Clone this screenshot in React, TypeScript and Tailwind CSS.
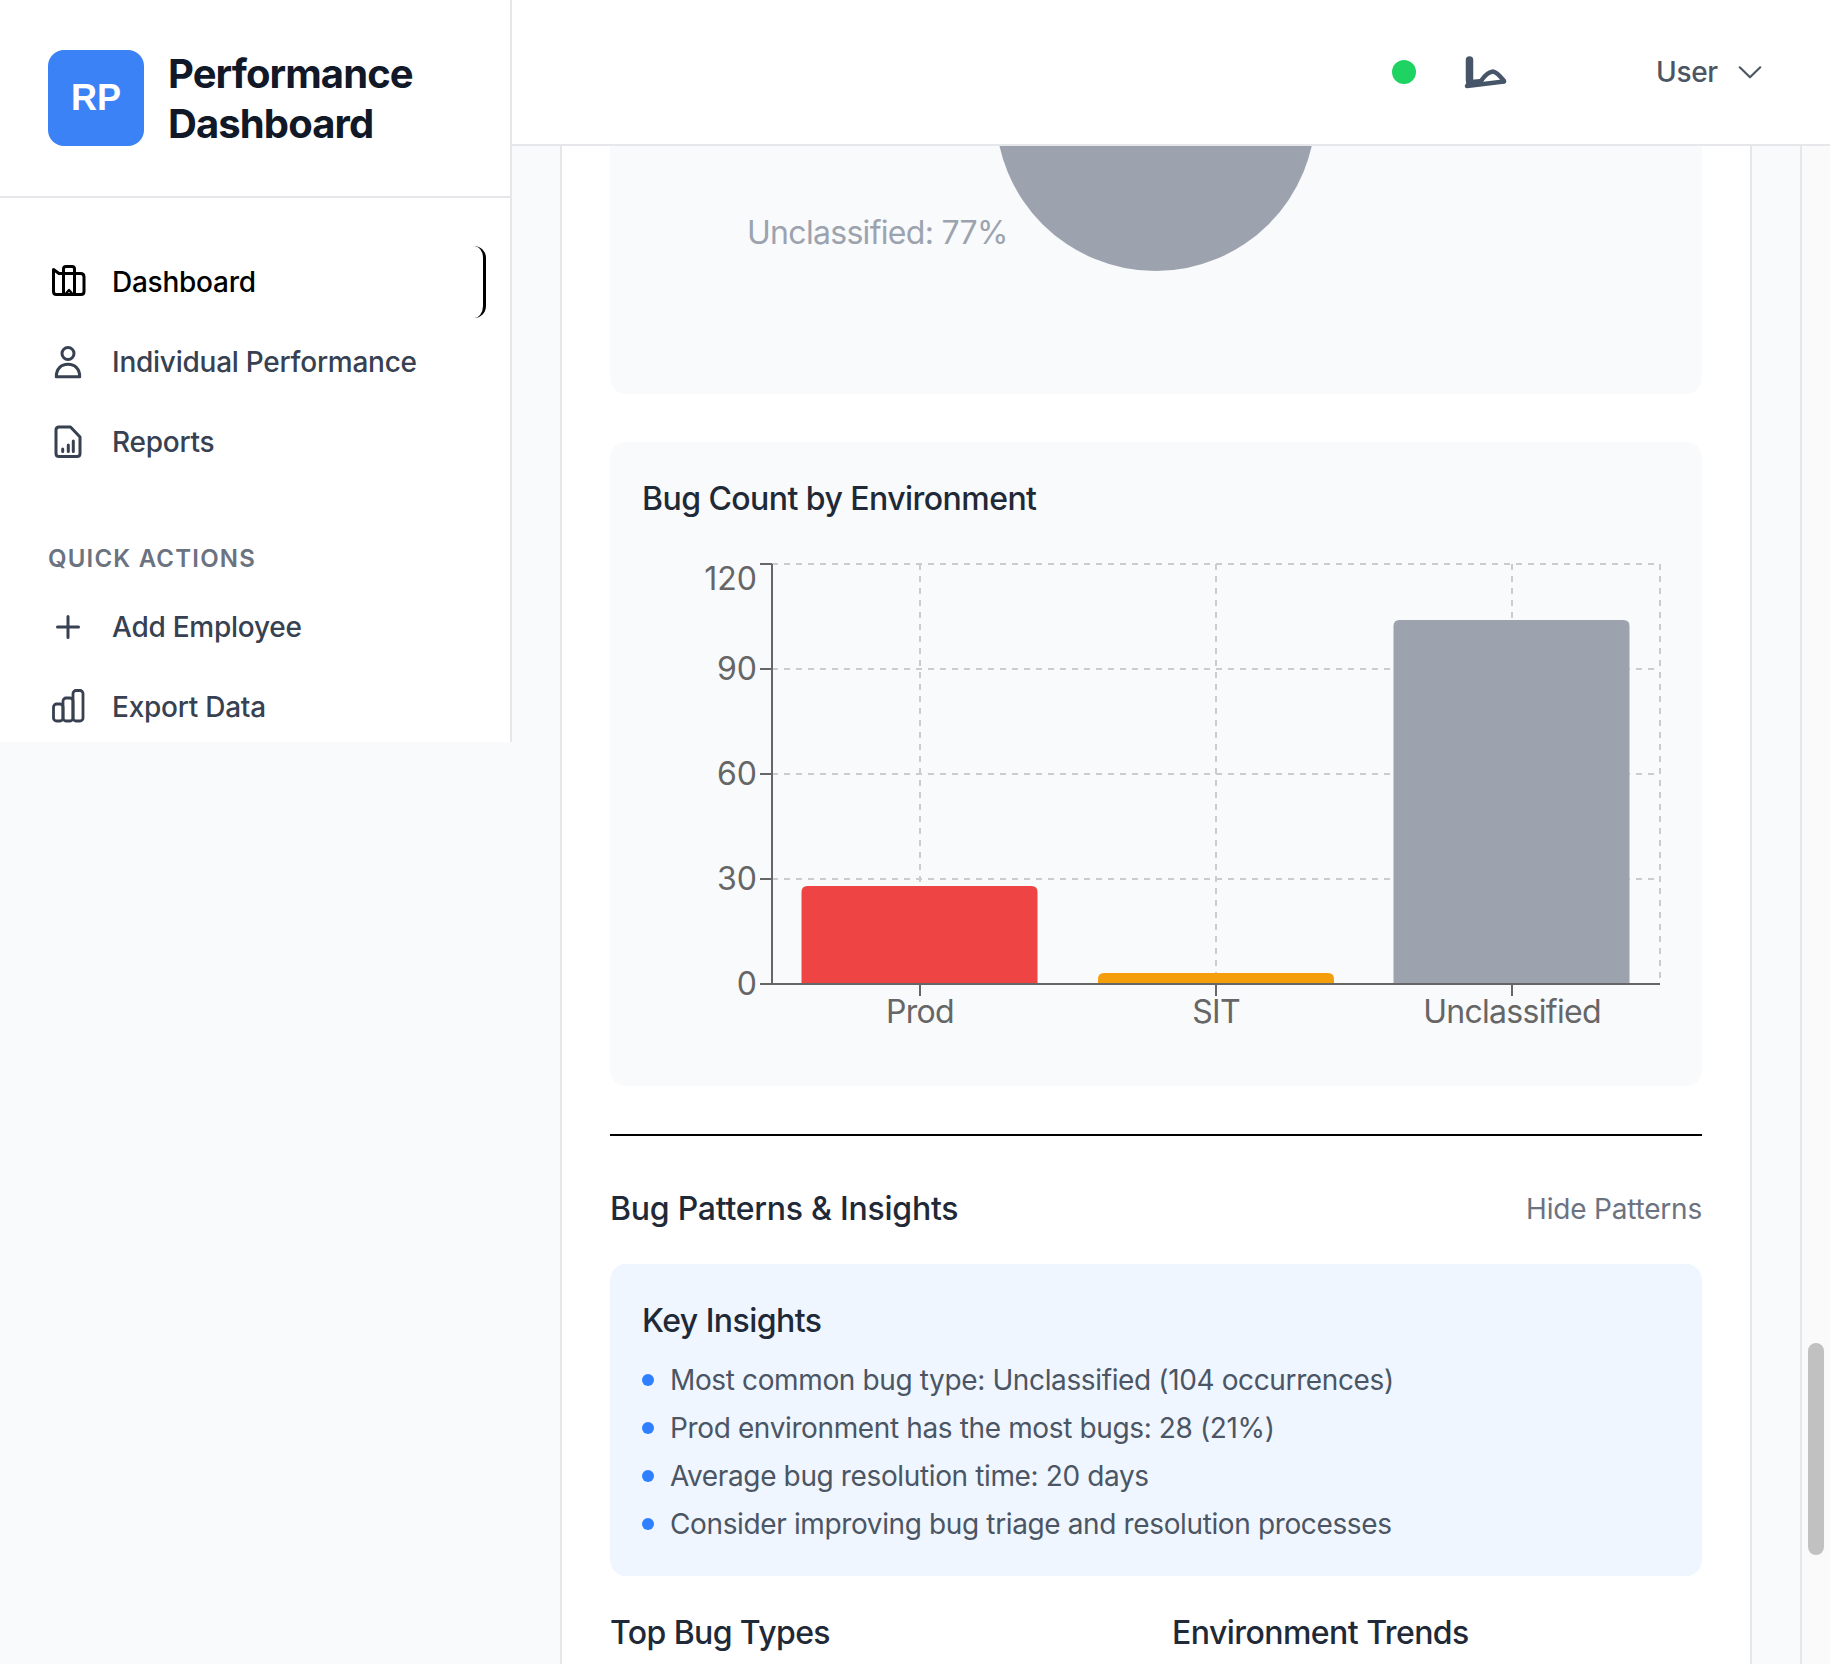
import React from "react";

const ChartIcon = () => (
	<svg viewBox="0 0 40 40" className="w-10 h-10 shrink-0" fill="none" stroke="currentColor" strokeWidth={2.8} strokeLinejoin="round">
		<rect x="5.5" y="17" width="9.5" height="17" rx="3" />
		<rect x="15" y="11" width="10" height="23" rx="3" />
		<rect x="25" y="3.5" width="10" height="30.5" rx="3" />
	</svg>
);

const BriefcaseIcon = () => (
	<svg viewBox="0 0 40 40" className="w-10 h-10 shrink-0" fill="none" stroke="currentColor" strokeWidth={3} strokeLinejoin="round" strokeLinecap="round">
		<path d="M5.5 7.5L11 11.5H32.5Q36 11.5 36 15V29.5Q36 32.5 33 32.5H8.5Q5.5 32.5 5.5 29.5Z" />
		<path d="M15.5 32V7Q15.5 4.5 18 4.5H24Q26.5 4.5 26.5 7V32" />
		<path d="M18 31.5L21 28L24 31.5" strokeWidth={2.4} />
	</svg>
);

const PersonIcon = () => (
	<svg viewBox="0 0 40 40" className="w-10 h-10 shrink-0" fill="none" stroke="currentColor" strokeWidth={3} strokeLinejoin="round">
		<circle cx="20" cy="11.5" r="6" />
		<path d="M8.3 34.7C8.3 27 13 22.3 20 22.3C27 22.3 31.7 27 31.7 34.7Z" />
	</svg>
);

const ReportIcon = () => (
	<svg viewBox="0 0 40 40" className="w-10 h-10 shrink-0" fill="none" stroke="currentColor" strokeWidth={3} strokeLinejoin="round" strokeLinecap="round">
		<path d="M11 5H22.5L32 15V31.5Q32 34.5 29 34.5H11Q8 34.5 8 31.5V8Q8 5 11 5Z" />
		<path d="M14.7 29.5V27M20.3 29.5V23M25.3 29.5V19" />
	</svg>
);

const PlusIcon = () => (
	<svg viewBox="0 0 40 40" className="w-10 h-10 shrink-0" fill="none" stroke="currentColor" strokeWidth={3} strokeLinecap="round">
		<path d="M20 9.5V30.5M9.5 20H30.5" />
	</svg>
);

interface INavProps {
	label: string;
	icon: React.ReactNode;
	active?: boolean;
}

const NavItem = (props: INavProps) => {
	return (
		<div
			className={`h-[72px] flex items-center gap-6 px-6 rounded-xl text-[28px] tracking-[-0.25px] font-medium ${
				props.active ? "text-black border-r-[3px] border-black" : "text-[#374151]"
			}`}
		>
			{props.icon}
			<span>{props.label}</span>
		</div>
	);
};

const Sidebar = () => {
	return (
		<aside className="w-[512px] h-[742px] shrink-0 bg-white border-r-2 border-[#e5e7eb] overflow-hidden">
			<div className="h-[198px] flex items-center gap-6 px-12 border-b-2 border-[#e5e7eb]">
				<div className="w-24 h-24 shrink-0 rounded-2xl bg-[#3b82f6] flex items-center justify-center text-white text-[36px] font-bold font-['Liberation_Sans',sans-serif]">
					RP
				</div>
				<h1 className="pt-[2px] text-[40px] leading-[50px] tracking-[-0.9px] font-bold text-[#111827]">
					Performance
					<br />
					Dashboard
				</h1>
			</div>
			<nav className="px-6 pt-12">
				<div className="flex flex-col gap-2">
					<NavItem label="Dashboard" icon={<BriefcaseIcon />} active />
					<NavItem label="Individual Performance" icon={<PersonIcon />} />
					<NavItem label="Reports" icon={<ReportIcon />} />
				</div>
				<h3 className="mt-[65px] mb-4 px-6 text-[24px] leading-8 font-semibold tracking-wider uppercase text-[#6b7280]">
					Quick Actions
				</h3>
				<div className="flex flex-col gap-2">
					<NavItem label="Add Employee" icon={<PlusIcon />} />
					<NavItem label="Export Data" icon={<ChartIcon />} />
				</div>
			</nav>
		</aside>
	);
};

const Header = () => {
	return (
		<header className="h-[146px] bg-white border-b-2 border-[#e5e7eb] flex items-center pl-[880px]">
			<div className="w-6 h-6 rounded-full bg-[#1fd363]" />
			<svg viewBox="0 0 48 36" className="w-12 h-9 ml-[44px]" fill="none" stroke="#475569" strokeLinecap="round" strokeLinejoin="round">
				<path d="M9.5 6V26" strokeWidth={7.5} />
				<path d="M7 32L44 27.5" strokeWidth={4.5} />
				<path d="M21 27Q27 18 33 17.5Q37 18 44 27" strokeWidth={4.5} />
				<path d="M9 29L20 28" strokeWidth={6} />
			</svg>
			<span className="ml-[148px] text-[28px] tracking-[-0.3px] text-[#4b5563] font-medium">User</span>
			<svg viewBox="0 0 24 24" className="w-8 h-8 ml-4" fill="none" stroke="#4b5563" strokeWidth={1.6} strokeLinecap="round" strokeLinejoin="round">
				<path d="M4.3 8.5L12 16L19.7 8.5" />
			</svg>
		</header>
	);
};

const BugPieClip = () => {
	return (
		<div className="h-[248px] rounded-b-2xl bg-[#f9fafb] overflow-hidden">
			<svg viewBox="610 146 1092 248" className="w-full h-full block">
				<circle cx="1155.6" cy="111" r="160" fill="#9ca3af" />
				<text x="747" y="244" fontSize="32" letterSpacing="-0.7" fill="#9ca3af">
					Unclassified: 77%
				</text>
			</svg>
		</div>
	);
};

const yTicks = [
	{ label: "120", y: 564, base: 590 },
	{ label: "90", y: 669, base: 680 },
	{ label: "60", y: 774, base: 785 },
	{ label: "30", y: 879, base: 890 },
	{ label: "0", y: 984, base: 995 },
];

const bars = [
	{ label: "Prod", x: 801.5, width: 236, y: 886, color: "#ef4444", center: 920 },
	{ label: "SIT", x: 1098, width: 236, y: 973, color: "#f59e0b", center: 1216 },
	{ label: "Unclassified", x: 1393.5, width: 236, y: 620, color: "#9ca3af", center: 1512 },
];

const roundedTop = (x: number, y: number, w: number) =>
	`M${x} 984V${y + 6}Q${x} ${y} ${x + 6} ${y}H${x + w - 6}Q${x + w} ${y} ${x + w} ${y + 6}V984Z`;

const EnvChart = () => {
	return (
		<svg viewBox="642 552 1028 502" className="w-full h-[502px] block">
			<g stroke="#ccc" strokeWidth={2} strokeDasharray="6 6" fill="none">
				<path d="M772 564H1660V984" />
				{yTicks.slice(1, 4).map((t) => (
					<path key={t.label} d={`M772 ${t.y}H1660`} />
				))}
				{bars.map((b) => (
					<path key={b.label} d={`M${b.center} 564V984`} />
				))}
			</g>
			{bars.map((b) => (
				<path key={b.label} d={roundedTop(b.x, b.y, b.width)} fill={b.color} />
			))}
			<path d="M772 564V984H1660" stroke="#666" strokeWidth={2} fill="none" />
			{yTicks.map((t) => (
				<g key={t.label}>
					<path d={`M760 ${t.y}H772`} stroke="#666" strokeWidth={2} />
					<text x="757" y={t.base} textAnchor="end" fontSize="32" fill="#666">
						{t.label}
					</text>
				</g>
			))}
			{bars.map((b) => (
				<g key={b.label}>
					<path d={`M${b.center} 984V996`} stroke="#666" strokeWidth={2} />
					<text x={b.center} y="1023" textAnchor="middle" fontSize="32" letterSpacing="-0.7" fill="#666">
						{b.label}
					</text>
				</g>
			))}
		</svg>
	);
};

const insights = [
	"Most common bug type: Unclassified (104 occurrences)",
	"Prod environment has the most bugs: 28 (21%)",
	"Average bug resolution time: 20 days",
	"Consider improving bug triage and resolution processes",
];

const Content = () => {
	return (
		<main className="flex-1 px-12 overflow-hidden">
			<div className="h-full bg-white border-x-2 border-[#e5e7eb] px-12">
				<BugPieClip />

				<section className="mt-12 h-[644px] rounded-2xl bg-[#f9fafb] px-8 pt-[33px]">
					<h3 className="text-[32px] leading-12 tracking-[-0.55px] font-medium text-[#1f2937]">Bug Count by Environment</h3>
					<div className="mt-[29px]">
						<EnvChart />
					</div>
				</section>

				<div className="mt-12 border-t-2 border-black pt-[49px]">
					<div className="h-12 flex items-center justify-between">
						<h3 className="text-[32px] tracking-[-0.25px] font-medium text-[#1f2937]">Bug Patterns &amp; Insights</h3>
						<button className="text-[28px] tracking-[-0.2px] text-[#6b7280]">Hide Patterns</button>
					</div>

					<div className="mt-[31px] h-[312px] rounded-2xl bg-[#eff6ff] px-8 pt-[33px]">
						<h4 className="text-[32px] leading-12 tracking-[-0.55px] font-medium text-[#1f2937]">Key Insights</h4>
						<ul className="mt-[15px] flex flex-col gap-2">
							{insights.map((text) => (
								<li key={text} className="h-10 flex items-center gap-4 text-[28px] tracking-[-0.37px] text-[#4b5563]">
									<span className="w-3 h-3 rounded-full bg-[#2f80ff] shrink-0" />
									<span>{text}</span>
								</li>
							))}
						</ul>
					</div>

					<div className="mt-[33px] grid grid-cols-2 gap-8">
						<h3 className="text-[32px] leading-12 tracking-[-0.6px] font-medium text-[#1f2937]">Top Bug Types</h3>
						<h3 className="text-[32px] leading-12 tracking-[-0.55px] font-medium text-[#1f2937]">Environment Trends</h3>
					</div>
				</div>
			</div>
		</main>
	);
};

const App = () => {
	return (
		<div className="w-[1830px] h-[1664px] flex bg-[#f9fafb] overflow-hidden font-['Inter',sans-serif]">
			<Sidebar />
			<div className="flex-1 flex flex-col min-w-0">
				<Header />
				<div className="flex-1 flex min-h-0">
					<Content />
					<div className="w-[30px] shrink-0 bg-[#fafafa] border-l-2 border-[#e5e7eb] pl-[6px] pt-[1197px]">
						<div className="w-4 h-[212px] rounded-full bg-[#c1c1c1]" />
					</div>
				</div>
			</div>
		</div>
	);
};

export default App;
